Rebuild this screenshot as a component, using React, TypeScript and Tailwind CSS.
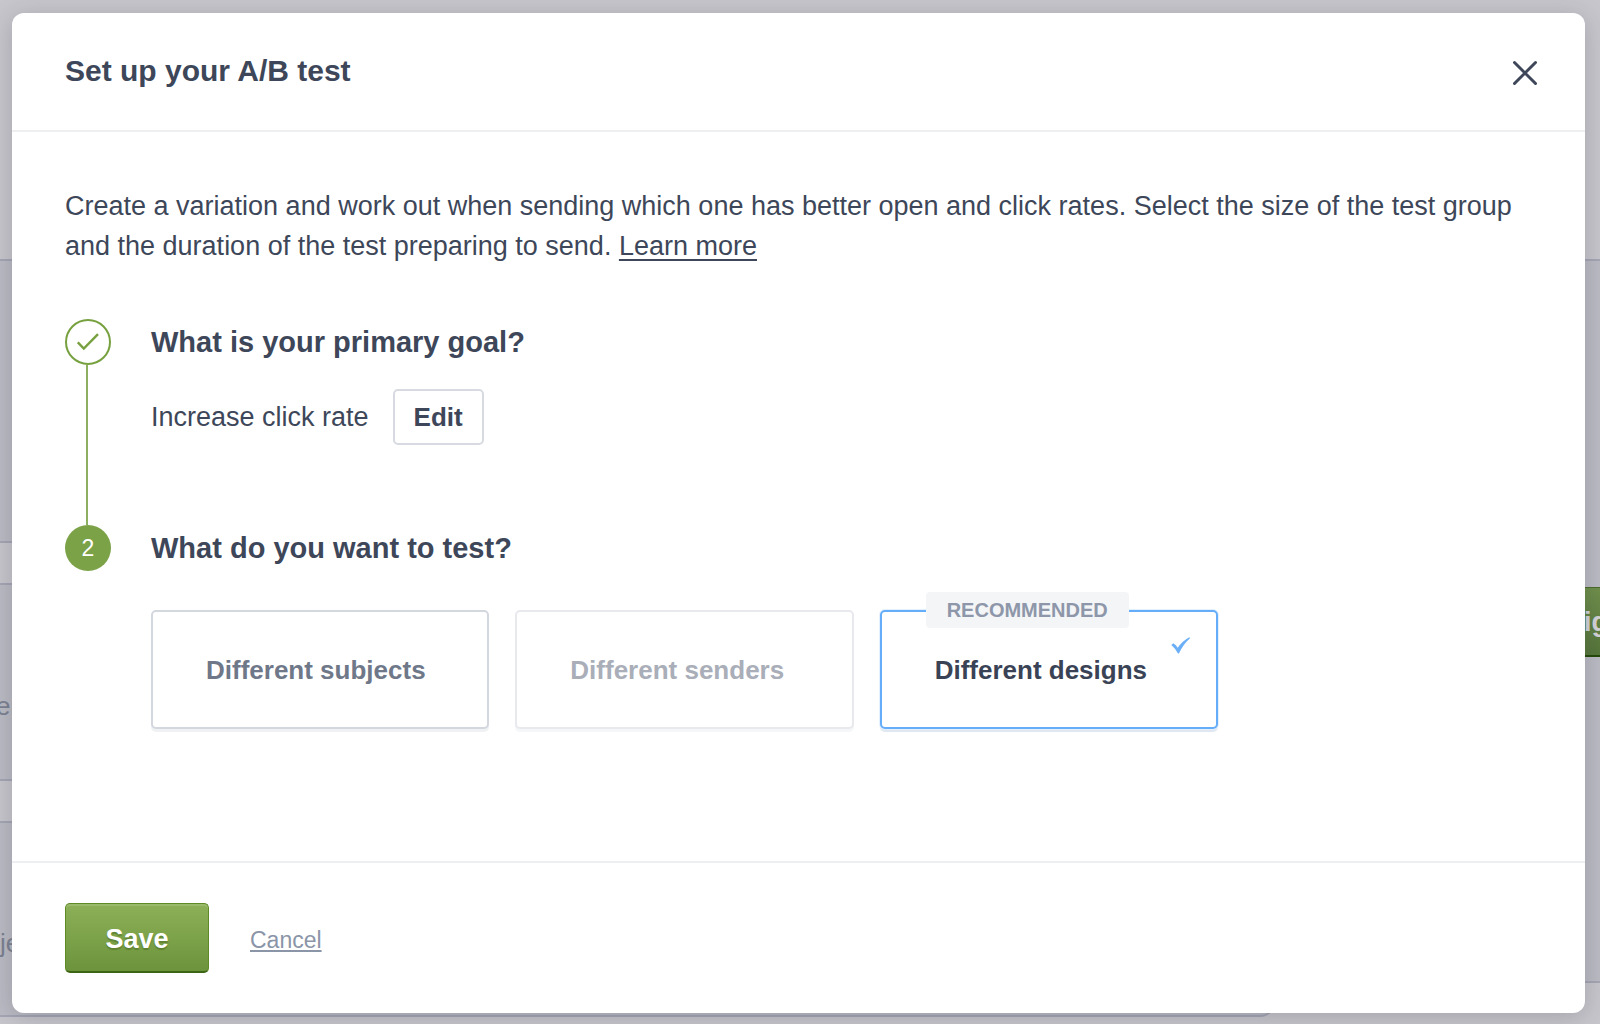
import { useState } from "react";

type Option = { id: string; label: string; disabled?: boolean; recommended?: boolean };

const options: Option[] = [
  { id: "subjects", label: "Different subjects" },
  { id: "senders", label: "Different senders", disabled: true },
  { id: "designs", label: "Different designs", recommended: true },
];

function Backdrop() {
  return (
    <div
      aria-hidden="true"
      className="absolute inset-0 flex overflow-hidden bg-[#c7c6cc] pt-[259px] text-[26px] leading-8 text-[#7b8291]"
    >
      <div className="-ml-1 flex w-[1280px] shrink-0 flex-col gap-10">
        <div className="h-[284px] border-y-2 border-[#a5a6b4] bg-[#bbbbc4]" />
        <div className="flex h-[198px] items-center border-y-2 border-[#a5a6b4] bg-[#bbbbc4] pt-12">er</div>
        <div className="flex h-[196px] items-center rounded-br-2xl border-y-2 border-r-2 border-[#a5a6b4] bg-[#bbbbc4] pt-12 pl-1">
          je
        </div>
      </div>
      <div className="-mr-2 h-[724px] min-w-0 flex-1 border-y-2 border-[#a5a6b4] bg-[#bbbbc4] pt-[326px]">
        <div className="flex h-[70px] items-center justify-end border-t border-b-2 border-t-[#4b6c2b] border-b-[#254a08] bg-linear-to-b from-[#6f8f4b] to-[#55753a] text-[27px] font-bold text-[#d3d3d8]">
          ig
        </div>
      </div>
    </div>
  );
}

function OptionCard({ option, checked, onSelect }: { option: Option; checked: boolean; onSelect: () => void }) {
  const tone = option.disabled
    ? "border-[#e8e9ed] text-[#a9aeb8] shadow-[0_3px_0_#f5f6f7]"
    : checked
      ? "border-[#65adf8] text-[#3a4356] shadow-[0_0_0_1px_#e3f0fe,0_3px_1px_#dfe6f0]"
      : "border-[#d3d7de] text-[#6f7889] shadow-[0_3px_0_#f0f1f2]";
  return (
    <label
      className={`relative flex h-[119px] flex-1 items-center rounded-[5px] border-2 bg-white pl-[53px] text-[26px] leading-8 font-bold ${tone}`}
    >
      <input
        type="radio"
        name="variation"
        className="sr-only"
        checked={checked}
        disabled={option.disabled}
        onChange={onSelect}
      />
      {option.label}
      {option.recommended && (
        <span className="absolute -top-5 left-11 flex h-9 items-center rounded-sm bg-[#f4f5f7] px-[21px] text-[20px] leading-6 text-[#8d97a9]">
          RECOMMENDED
        </span>
      )}
      {checked && (
        <svg viewBox="0 0 20 18" className="absolute top-[25px] right-[25px] h-[18px] w-5" fill="#6bb0f7" aria-hidden="true">
          <path d="M0.3 8 L2.2 6.2 Q4.8 7.6 6.7 10.7 Q11.5 3.8 18.3 0.2 L19 1.2 Q12 7.5 7.9 16.4 L7 16.4 Q4.2 11.4 0.3 8 Z" />
        </svg>
      )}
    </label>
  );
}

export default function App() {
  const [selected, setSelected] = useState("designs");
  return (
    <div className="relative flex min-h-screen overflow-hidden font-['Liberation_Sans',Arial,sans-serif] text-[#3d4759]">
      <Backdrop />
      <div
        role="dialog"
        aria-labelledby="dialog-title"
        className="relative mt-[13px] mr-[15px] mb-[11px] ml-3 flex flex-1 flex-col rounded-xl bg-white shadow-[0_4px_24px_rgba(40,40,60,0.22)]"
      >
        <header className="flex items-center justify-between border-b-2 border-[#eeeff1] pt-10 pr-[46px] pb-[41px] pl-[53px]">
          <h1 id="dialog-title" className="text-[30px] leading-9 font-bold">
            Set up your A/B test
          </h1>
          <button type="button" aria-label="Close" className="pt-1">
            <svg viewBox="0 0 28 28" className="size-7" fill="none" stroke="#3d4759" strokeWidth="3" strokeLinecap="round" aria-hidden="true">
              <path d="M3.5 3.5 L24.5 24.5 M24.5 3.5 L3.5 24.5" />
            </svg>
          </button>
        </header>

        <main className="flex-1 px-[53px] pt-[54px]">
          <p className="text-[27px] leading-10">
            Create a variation and work out when sending which one has better open and click rates. Select the size of
            the test group and the duration of the test preparing to send.{" "}
            <a href="#learn" className="underline decoration-2 underline-offset-4">
              Learn more
            </a>
          </p>

          <ol className="mt-[53px]">
            <li className="flex gap-10">
              <div className="flex w-[46px] shrink-0 flex-col items-center">
                <span className="flex size-[46px] items-center justify-center rounded-full border-2 border-[#77a03f]">
                  <svg viewBox="0 0 22 18" className="h-[18px] w-[22px]" fill="none" stroke="#77a03f" strokeWidth="2.4" aria-hidden="true">
                    <path d="M0.8 9.3 L6.8 15.5 L21 1.2" />
                  </svg>
                </span>
                <span className="mr-0.5 w-0.5 flex-1 bg-[#8caf60]" />
              </div>
              <div className="h-[206px]">
                <h2 className="text-[29px] leading-[46px] font-bold">What is your primary goal?</h2>
                <div className="mt-6 flex items-center gap-6 text-[27px] leading-8">
                  <span>Increase click rate</span>
                  <button type="button" className="h-14 rounded-[5px] border-2 border-[#d7dbe1] px-[19px] text-[26px] font-bold">
                    Edit
                  </button>
                </div>
              </div>
            </li>
            <li className="flex gap-10">
              <span className="flex size-[46px] shrink-0 items-center justify-center rounded-full bg-[#7ba247] text-[23px] text-white">
                2
              </span>
              <div className="flex-1">
                <h2 className="text-[29px] leading-[46px] font-bold">What do you want to test?</h2>
                <div className="mt-[39px] flex max-w-[1067px] gap-[26px]">
                  {options.map((option) => (
                    <OptionCard
                      key={option.id}
                      option={option}
                      checked={selected === option.id}
                      onSelect={() => setSelected(option.id)}
                    />
                  ))}
                </div>
              </div>
            </li>
          </ol>
        </main>

        <footer className="flex items-center gap-[41px] border-t-2 border-[#eeeff2] px-[53px] py-10">
          <button
            type="button"
            className="h-[70px] w-36 rounded-[5px] border border-b-2 border-[#5f8a26] border-b-[#3c6614] bg-linear-to-b from-[#8db058] to-[#6c943c] pt-1 text-[27px] font-bold text-white shadow-[inset_0_2px_0_#9bbb6c] [text-shadow:0_2px_1px_rgba(60,90,20,0.4)]"
          >
            Save
          </button>
          <button type="button" className="pt-1 text-[23px] leading-8 text-[#8b95a8] underline decoration-2 underline-offset-2">
            Cancel
          </button>
        </footer>
      </div>
    </div>
  );
}
